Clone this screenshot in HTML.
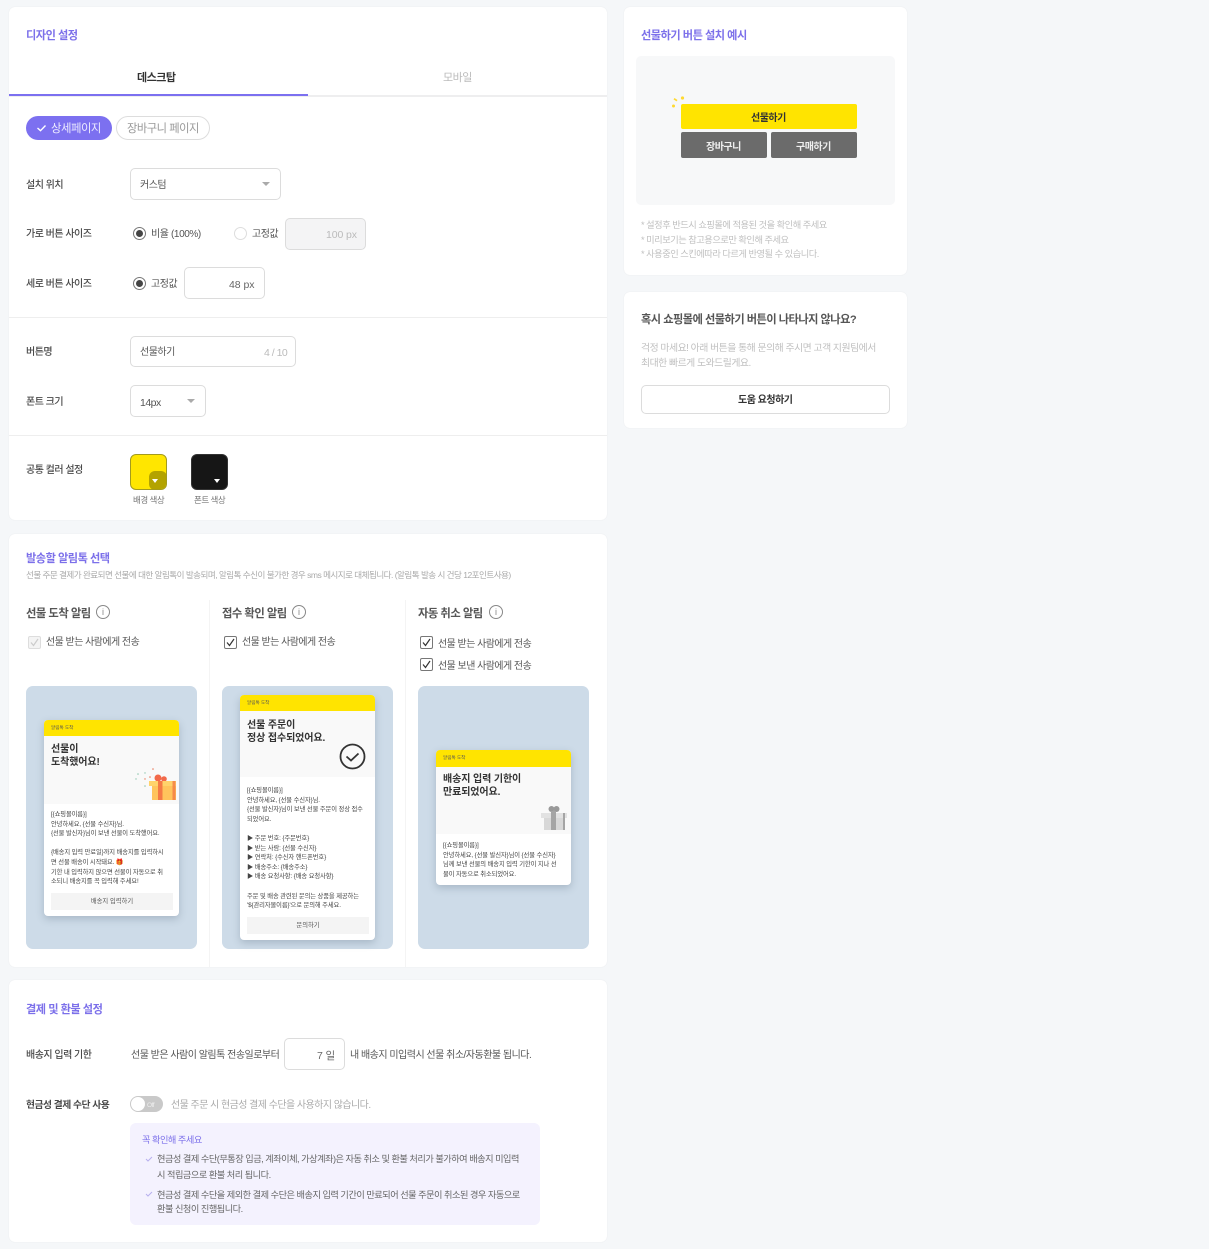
<!DOCTYPE html>
<html lang="ko"><head><meta charset="utf-8"><title>디자인 설정</title>
<style>
*{box-sizing:border-box}
html,body{margin:0;padding:0}
body{width:1209px;height:1249px;background:#f5f7f9;position:relative;overflow:hidden;font-family:"Liberation Sans","Noto Sans CJK KR",sans-serif;color:#555}
.a,.t,.b{position:absolute}
.t{white-space:nowrap;line-height:20px;height:20px;font-size:10px;letter-spacing:-.5px;color:#555;filter:blur(.3px);margin-top:4px}
.card{position:absolute;background:#fff;border-radius:6px;box-shadow:0 0 1px rgba(0,0,0,.1)}
.h{color:#7c70ea;font-size:11.2px;font-weight:700;margin-top:2px}
.lab{color:#4a4a4a;font-size:10px;font-weight:500}
.g{color:#bbb}
.b{background:#fff;border:1px solid #dcdcdc;border-radius:5px}
.hr{position:absolute;left:9px;width:598px;height:1px;background:#eee}
.arrow{position:absolute;width:0;height:0;border-left:4px solid transparent;border-right:4px solid transparent;border-top:4px solid #aaa}
.radio{position:absolute;width:13px;height:13px;border-radius:50%;border:1px solid #777;background:#fff}
.radio i{position:absolute;left:2px;top:2px;width:7px;height:7px;border-radius:50%;background:#444}
.radio.off{border-color:#ddd}
.cb{position:absolute;width:13px;height:13px}
.info{position:absolute;width:14px;height:14px;border:1px solid #888;border-radius:50%;color:#888;font-size:9px;line-height:12px;text-align:center}
.panel{position:absolute;background:#cddbe8;border-radius:7px;width:171px;height:263px;top:686px}
.m{position:absolute;background:#fff;width:135px;border-radius:4px;overflow:hidden;box-shadow:0 3px 8px rgba(60,80,100,.25)}
.my{position:absolute;left:0;top:0;width:135px;background:#ffe400}
.mg{position:absolute;left:0;width:135px;background:#f9f9f9}
.mt{position:absolute;left:7px;white-space:nowrap;font-size:10px;font-weight:700;line-height:13px;color:#333;letter-spacing:-.1px;filter:blur(.25px)}
.ms{position:absolute;left:7px;white-space:nowrap;font-size:6.3px;line-height:9.6px;color:#444;letter-spacing:-.12px;filter:blur(.25px)}
.mh{position:absolute;left:7px;top:4px;font-size:4.6px;line-height:7px;color:#555;white-space:nowrap}
.mb{position:absolute;left:7px;width:122px;height:17px;background:#f4f4f4;font-size:6.3px;line-height:17px;text-align:center;color:#555}
.vl{position:absolute;top:600px;width:1px;height:367px;background:#f4f4f4}
</style></head><body>

<div class="card" style="left:9px;top:7px;width:598px;height:513px"></div>
<div class="card" style="left:9px;top:534px;width:598px;height:433px"></div>
<div class="card" style="left:9px;top:980px;width:598px;height:262px"></div>
<div class="card" style="left:624px;top:7px;width:283px;height:268px"></div>
<div class="card" style="left:624px;top:292px;width:283px;height:136px"></div>

<div class="t h" style="left:26px;top:24px">디자인 설정</div>
<div class="t" style="left:137px;top:64px;font-size:11px;font-weight:700;color:#333">데스크탑</div>
<div class="t g" style="left:443px;top:64px;font-size:11px">모바일</div>
<div class="a" style="left:9px;top:95px;width:598px;height:2px;background:#eeeeef"></div>
<div class="a" style="left:9px;top:94px;width:299px;height:2px;background:#7c70f0"></div>

<div class="a" style="left:26px;top:116px;width:86px;height:24px;border-radius:12px;background:#7c70f0"></div>
<svg class="a" style="left:36px;top:123px" width="11" height="10" viewBox="0 0 11 10"><path d="M1.5 5l3 2.7L9.5 2.5" fill="none" stroke="#fff" stroke-width="1.4"/></svg>
<div class="t" style="left:51px;top:115px;font-size:11.4px;color:#ecebff">상세페이지</div>
<div class="a" style="left:116px;top:116px;width:94px;height:24px;border-radius:12px;background:#fff;border:1px solid #ddd"></div>
<div class="t" style="left:127px;top:115px;font-size:11.3px;color:#999">장바구니 페이지</div>

<div class="t lab" style="left:26px;top:172px">설치 위치</div>
<div class="b" style="left:130px;top:168px;width:151px;height:32px"></div>
<div class="t" style="left:140px;top:172px">커스텀</div>
<div class="arrow" style="left:262px;top:182px"></div>

<div class="t lab" style="left:26px;top:221px">가로 버튼 사이즈</div>
<div class="radio" style="left:133px;top:227px"><i></i></div>
<div class="t" style="left:151px;top:221px;letter-spacing:-.4px">비율 (100%)</div>
<div class="radio off" style="left:234px;top:227px"></div>
<div class="t" style="left:252px;top:221px">고정값</div>
<div class="b" style="left:285px;top:218px;width:81px;height:32px;background:#f4f4f5"></div>
<div class="t g" style="left:326px;top:221px;font-size:10.5px;letter-spacing:-.1px">100 px</div>

<div class="t lab" style="left:26px;top:271px">세로 버튼 사이즈</div>
<div class="radio" style="left:133px;top:277px"><i></i></div>
<div class="t" style="left:151px;top:271px">고정값</div>
<div class="b" style="left:184px;top:267px;width:81px;height:32px"></div>
<div class="t" style="left:229px;top:271px;font-size:10.5px;color:#666;letter-spacing:-.05px">48 px</div>

<div class="hr" style="top:317px"></div>

<div class="t lab" style="left:26px;top:339px">버튼명</div>
<div class="b" style="left:130px;top:336px;width:166px;height:31px"></div>
<div class="t" style="left:140px;top:339px">선물하기</div>
<div class="t g" style="left:264px;top:339px;font-size:10.5px">4 / 10</div>

<div class="t lab" style="left:26px;top:389px">폰트 크기</div>
<div class="b" style="left:130px;top:385px;width:76px;height:32px"></div>
<div class="t" style="left:140px;top:389px;font-size:10.5px">14px</div>
<div class="arrow" style="left:187px;top:399px"></div>

<div class="hr" style="top:435px"></div>

<div class="t lab" style="left:26px;top:457px">공통 컬러 설정</div>
<div class="a" style="left:130px;top:454px;width:37px;height:36px;border-radius:6px;background:#ffe600;border:1px solid #a39b1e;overflow:hidden"><div class="a" style="right:-1px;bottom:-1px;width:18px;height:19px;background:#b3a300;border-radius:6px"></div></div>
<div class="arrow" style="left:152px;top:479px;border-top-color:#fff;border-left-width:3.5px;border-right-width:3.5px"></div>
<div class="t" style="left:133px;top:486px;font-size:8.5px;color:#777">배경 색상</div>
<div class="a" style="left:191px;top:454px;width:37px;height:36px;border-radius:6px;background:#161616;border:1px solid #333"></div>
<div class="arrow" style="left:214px;top:479px;border-top-color:#fff;border-left-width:3.5px;border-right-width:3.5px"></div>
<div class="t" style="left:194px;top:486px;font-size:8.5px;color:#777">폰트 색상</div>

<div class="t h" style="left:26px;top:546px;margin-top:2.5px">발송할 알림톡 선택</div>
<div class="t" style="left:26px;top:561px;font-size:8.56px;color:#aaa;letter-spacing:-.52px">선물 주문 결제가 완료되면 선물에 대한 알림톡이 발송되며, 알림톡 수신이 불가한 경우 sms 메시지로 대체됩니다. (알림톡 발송 시 건당 12포인트사용)</div>

<div class="vl" style="left:209px"></div>
<div class="vl" style="left:405px"></div>

<div class="t" style="left:26px;top:600px;font-size:11.3px;font-weight:700;color:#555">선물 도착 알림</div>
<div class="info" style="left:96px;top:605px">i</div>
<div class="t" style="left:222px;top:600px;font-size:11.3px;font-weight:700;color:#555">접수 확인 알림</div>
<div class="info" style="left:292px;top:605px">i</div>
<div class="t" style="left:418px;top:600px;font-size:11.3px;font-weight:700;color:#555">자동 취소 알림</div>
<div class="info" style="left:489px;top:605px">i</div>

<svg class="cb" style="left:28px;top:636px" viewBox="0 0 13 13"><rect x=".5" y=".5" width="12" height="12" rx="1.5" fill="#f4f4f4" stroke="#ddd"/><path d="M3 6.5l2.5 3L10 3" fill="none" stroke="#ccc" stroke-width="1.2"/></svg>
<div class="t" style="left:46px;top:629px;font-size:9.95px">선물 받는 사람에게 전송</div>
<svg class="cb" style="left:224px;top:636px" viewBox="0 0 13 13"><rect x=".5" y=".5" width="12" height="12" rx="1.5" fill="#fff" stroke="#777"/><path d="M3 6.5l2.5 3L10 3" fill="none" stroke="#333" stroke-width="1.2"/></svg>
<div class="t" style="left:242px;top:629px;font-size:9.95px">선물 받는 사람에게 전송</div>
<svg class="cb" style="left:420px;top:636px" viewBox="0 0 13 13"><rect x=".5" y=".5" width="12" height="12" rx="1.5" fill="#fff" stroke="#777"/><path d="M3 6.5l2.5 3L10 3" fill="none" stroke="#333" stroke-width="1.2"/></svg>
<div class="t" style="left:438px;top:631px;font-size:9.95px">선물 받는 사람에게 전송</div>
<svg class="cb" style="left:420px;top:658px" viewBox="0 0 13 13"><rect x=".5" y=".5" width="12" height="12" rx="1.5" fill="#fff" stroke="#777"/><path d="M3 6.5l2.5 3L10 3" fill="none" stroke="#333" stroke-width="1.2"/></svg>
<div class="t" style="left:438px;top:653px;font-size:9.95px">선물 보낸 사람에게 전송</div>

<div class="panel" style="left:26px"></div>
<div class="panel" style="left:222px"></div>
<div class="panel" style="left:418px"></div>

<div class="m" style="left:44px;top:720px;height:196px">
<div class="my" style="height:16px"></div><div class="mh">알림톡 도착</div>
<div class="mg" style="top:16px;height:68px"></div>
<div class="mt" style="top:23px">선물이<br>도착했어요!</div>
<svg class="a" style="left:90px;top:46px" width="45" height="38" viewBox="0 0 45 38">
<g fill="#e8785a"><circle cx="19" cy="3" r=".8"/><circle cx="16" cy="11" r=".8"/><circle cx="11" cy="13" r=".7"/></g>
<g fill="#8fc7b0"><circle cx="4" cy="8" r=".8"/><circle cx="11" cy="7" r=".7"/><circle cx="2" cy="13" r=".7"/><circle cx="11" cy="20" r=".8"/></g>
<circle cx="24" cy="12" r="3.5" fill="#f2694a"/><circle cx="30" cy="13" r="2.800" fill="#f2694a"/>
<rect x="18" y="19" width="24" height="15" fill="#ffc45c"/><rect x="15" y="15" width="27" height="5" fill="#ffd36b"/>
<rect x="24" y="15" width="4.500" height="19" fill="#f47a45"/><rect x="38.500" y="15" width="3" height="19" fill="#f47a45" opacity=".8"/>
</svg>
<div class="ms" style="top:90px">[{쇼핑몰이름}]<br>안녕하세요, {선물 수신자}님.<br>{선물 발신자}님이 보낸 선물이 도착했어요.<br><br>{배송지 입력 만료일}까지 배송지를 입력하시<br>면 선물 배송이 시작돼요. 🎁<br>기한 내 입력하지 않으면 선물이 자동으로 취<br>소되니 배송지를 꼭 입력해 주세요!</div>
<div class="mb" style="top:173px">배송지 입력하기</div>
</div>

<div class="m" style="left:240px;top:695px;height:245px">
<div class="my" style="height:16px"></div><div class="mh">알림톡 도착</div>
<div class="mg" style="top:16px;height:66px"></div>
<div class="mt" style="top:24px">선물 주문이<br>정상 접수되었어요.</div>
<svg class="a" style="left:99px;top:48px" width="27" height="27" viewBox="0 0 27 27"><circle cx="13.5" cy="13.5" r="12" fill="none" stroke="#333" stroke-width="1.8"/><path d="M7.5 13.5l4.5 4 7.5-7" fill="none" stroke="#333" stroke-width="1.8"/></svg>
<div class="ms" style="top:91px">[{쇼핑몰이름}]<br>안녕하세요, {선물 수신자}님.<br>{선물 발신자}님이 보낸 선물 주문이 정상 접수<br>되었어요.<br><br>▶ 주문 번호: {주문번호}<br>▶ 받는 사람: {선물 수신자}<br>▶ 연락처: {수신자 핸드폰번호}<br>▶ 배송주소: {배송주소}<br>▶ 배송 요청사항: {배송 요청사항}<br><br>주문 및 배송 관련된 문의는 상품을 제공하는<br>'${관리자몰이름}'으로 문의해 주세요.</div>
<div class="mb" style="top:222px">문의하기</div>
</div>

<div class="m" style="left:436px;top:750px;height:135px">
<div class="my" style="height:17px"></div><div class="mh">알림톡 도착</div>
<div class="mg" style="top:17px;height:67px"></div>
<div class="mt" style="top:23px">배송지 입력 기한이<br>만료되었어요.</div>
<svg class="a" style="left:104px;top:55px" width="31" height="28" viewBox="0 0 31 28">
<circle cx="11.500" cy="4" r="3" fill="#999"/><circle cx="16.500" cy="4" r="3" fill="#999"/>
<rect x="4" y="13" width="21" height="12" fill="#d8d8d8"/><rect x="1" y="8" width="26" height="5" fill="#e2e2e2"/>
<rect x="11" y="6" width="5" height="19" fill="#a5a5a5"/><rect x="23" y="8" width="2" height="17" fill="#a5a5a5"/>
</svg>
<div class="ms" style="top:91px">[{쇼핑몰이름}]<br>안녕하세요, {선물 발신자}님이 {선물 수신자}<br>님께 보낸 선물의 배송지 입력 기한이 지나 선<br>물이 자동으로 취소되었어요.</div>
</div>

<div class="t h" style="left:26px;top:998px">결제 및 환불 설정</div>
<div class="t lab" style="left:26px;top:1042px">배송지 입력 기한</div>
<div class="t" style="left:131px;top:1042px">선물 받은 사람이 알림톡 전송일로부터</div>
<div class="b" style="left:284px;top:1038px;width:61px;height:32px"></div>
<div class="t" style="left:317px;top:1042px;font-size:10.5px;color:#666;letter-spacing:-.1px">7 일</div>
<div class="t" style="left:350px;top:1042px">내 배송지 미입력시 선물 취소/자동환불 됩니다.</div>

<div class="t lab" style="left:26px;top:1092px;font-weight:700;font-size:9.8px">현금성 결제 수단 사용</div>
<div class="a" style="left:130px;top:1096px;width:33px;height:16px;border-radius:8px;background:#c9c9c9"></div>
<div class="a" style="left:131px;top:1097px;width:14px;height:14px;border-radius:50%;background:#fff"></div>
<div class="t" style="left:147px;top:1092px;font-size:6.5px;color:#eee">Off</div>
<div class="t" style="left:171px;top:1092px;color:#aaa;font-size:9.95px">선물 주문 시 현금성 결제 수단을 사용하지 않습니다.</div>

<div class="a" style="left:130px;top:1123px;width:410px;height:102px;background:#f4f2fe;border-radius:6px"></div>
<div class="t" style="left:142px;top:1126px;font-size:9.2px;color:#7c70ea">꼭 확인해 주세요</div>
<svg class="a" style="left:145px;top:1155px" width="8" height="8" viewBox="0 0 8 8"><path d="M1 4l2 2 4-4" fill="none" stroke="#b7b0ee"/></svg>
<div class="t" style="left:157px;top:1145px;font-size:9.2px;color:#666">현금성 결제 수단(무통장 입금, 계좌이체, 가상계좌)은 자동 취소 및 환불 처리가 불가하여 배송지 미입력</div>
<div class="t" style="left:157px;top:1161px;font-size:9.2px;color:#666">시 적립금으로 환불 처리 됩니다.</div>
<svg class="a" style="left:145px;top:1190px" width="8" height="8" viewBox="0 0 8 8"><path d="M1 4l2 2 4-4" fill="none" stroke="#b7b0ee"/></svg>
<div class="t" style="left:157px;top:1181px;font-size:9.2px;color:#666">현금성 결제 수단을 제외한 결제 수단은 배송지 입력 기간이 만료되어 선물 주문이 취소된 경우 자동으로</div>
<div class="t" style="left:157px;top:1195px;font-size:9.2px;color:#666">환불 신청이 진행됩니다.</div>

<div class="t h" style="left:641px;top:24px">선물하기 버튼 설치 예시</div>
<div class="a" style="left:636px;top:56px;width:259px;height:149px;background:#f7f8f9;border-radius:5px"></div>
<svg class="a" style="left:670px;top:95px" width="16" height="14" viewBox="0 0 16 14"><g fill="#ffd930"><circle cx="12.5" cy="3" r="1.6"/><path d="M4.5 3l3 2-1 1.4-3-2z"/><circle cx="3.500" cy="11" r="1.500"/></g></svg>
<div class="a" style="left:681px;top:104px;width:176px;height:25px;background:#ffe400;border-radius:2px"></div>
<div class="t" style="left:751px;top:105px;color:#333;font-weight:700">선물하기</div>
<div class="a" style="left:681px;top:132px;width:86px;height:26px;background:#6b6b6b;border-radius:2px"></div>
<div class="t" style="left:706px;top:134px;color:#eee;font-weight:700">장바구니</div>
<div class="a" style="left:771px;top:132px;width:86px;height:26px;background:#6b6b6b;border-radius:2px"></div>
<div class="t" style="left:796px;top:134px;color:#eee;font-weight:700">구매하기</div>
<div class="t" style="left:641px;top:211px;font-size:9.25px;color:#c0c0c0">* 설정후 반드시 쇼핑몰에 적용된 것을 확인해 주세요</div>
<div class="t" style="left:641px;top:225.5px;font-size:9.25px;color:#c0c0c0">* 미리보기는 참고용으로만 확인해 주세요</div>
<div class="t" style="left:641px;top:239.5px;font-size:9.25px;color:#c0c0c0">* 사용중인 스킨에따라 다르게 반영될 수 있습니다.</div>

<div class="t" style="left:641px;top:306px;font-size:11.2px;font-weight:700;color:#555">혹시 쇼핑몰에 선물하기 버튼이 나타나지 않나요?</div>
<div class="t" style="left:641px;top:335px;font-size:9.9px;color:#c0c0c0">걱정 마세요! 아래 버튼을 통해 문의해 주시면 고객 지원팀에서</div>
<div class="t" style="left:641px;top:350px;font-size:9.9px;color:#c0c0c0">최대한 빠르게 도와드릴게요.</div>
<div class="b" style="left:641px;top:385px;width:249px;height:29px"></div>
<div class="t" style="left:738px;top:387px;color:#333;font-weight:700">도움 요청하기</div>
</body></html>
